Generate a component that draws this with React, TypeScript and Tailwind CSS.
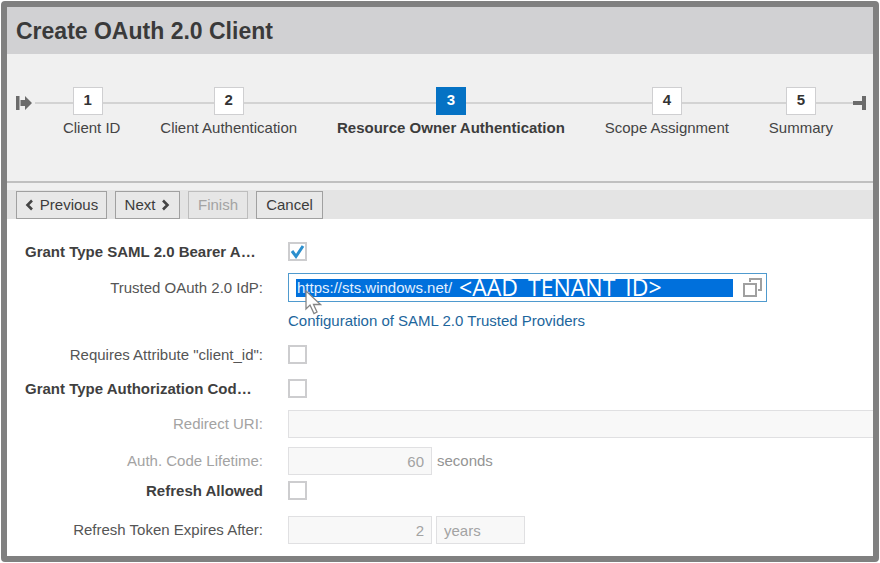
import { useState, type ReactNode } from "react";
import clsx from "clsx";

const steps = ["Client ID", "Client Authentication", "Resource Owner Authentication", "Scope Assignment", "Summary"];
const current = 2;

function StartMark() {
  return (
    <svg width="19" height="16" viewBox="0 0 19 16" className="mt-1 shrink-0" aria-hidden="true">
      <path d="M0 1h3.500v14H0zM4.500 5H9V1l7 7-7 7v-4H4.500z" fill="#6b6b6b" />
    </svg>
  );
}

function EndMark() {
  return (
    <svg width="13" height="16" viewBox="0 0 13 16" className="mt-1 shrink-0" aria-hidden="true">
      <path d="M0 6h9V1h4v14H9v-5H0z" fill="#6b6b6b" />
    </svg>
  );
}

function Roadmap() {
  return (
    <nav aria-label="Wizard steps" className="flex h-[127px] items-start pt-[33px] pr-[7px] pl-[9px]">
      <div className="flex h-7 items-center">
        <StartMark />
      </div>
      <ol className="flex min-w-0 flex-1">
        {steps.map((step, i) => (
          <li key={step} className="flex-auto" aria-current={i === current ? "step" : undefined}>
            <div className="flex items-center">
              <div className="mt-1 h-0.5 flex-1 bg-[#d3d3d3]" />
              <div
                className={clsx(
                  "flex h-7 w-[30px] items-center justify-center border pb-0.5 font-bold",
                  i === current ? "border-[#0572c4] bg-[#0572c4] text-white" : "border-[#cfcfd1] bg-white text-[#333]",
                )}
              >
                {i + 1}
              </div>
              <div className="mt-1 h-0.5 flex-1 bg-[#d3d3d3]" />
            </div>
            <div
              className={clsx(
                "mt-1 pr-[19px] text-center leading-[18px] whitespace-nowrap",
                i === 0 ? "pl-[27px]" : "pl-[19px]",
                i === current ? "font-bold text-[#3c3c3c]" : "text-[#444]",
              )}
            >
              {step}
            </div>
          </li>
        ))}
      </ol>
      <div className="flex h-7 items-center">
        <EndMark />
      </div>
    </nav>
  );
}

function Chevron({ right = false }: { right?: boolean }) {
  return (
    <svg width="8" height="12" viewBox="0 0 8 12" fill="none" stroke="#444" strokeWidth="2.600" aria-hidden="true">
      <path d={right ? "M1 1.500L5.500 6 1 10.500" : "M7 1.500L2.500 6 7 10.500"} />
    </svg>
  );
}

function ToolButton({
  children,
  className,
  disabled = false,
}: {
  children: ReactNode;
  className: string;
  disabled?: boolean;
}) {
  return (
    <button
      type="button"
      disabled={disabled}
      className={clsx(
        "flex h-7 items-center justify-center gap-[7px] border",
        disabled ? "border-[#bdbdbd] bg-[#e6e6e6] text-[#a3a3a3]" : "border-[#a0a0a0] bg-[#e8e8e8] text-[#3c3c3c]",
        className,
      )}
    >
      {children}
    </button>
  );
}

function Row({
  id,
  label,
  className,
  tone = "normal",
  children,
}: {
  id: string;
  label: string;
  className?: string;
  tone?: "normal" | "heading" | "clipped" | "muted";
  children: ReactNode;
}) {
  return (
    <div className={clsx("flex items-center gap-[25px]", className)}>
      <label
        htmlFor={id}
        className={clsx(
          "w-[238px] shrink-0 leading-[18px] whitespace-nowrap",
          tone === "clipped" ? "pt-0.5 text-left" : "text-right",
          tone === "normal" && "text-[#555]",
          tone === "muted" && "text-[#a3a3a3]",
          (tone === "heading" || tone === "clipped") && "font-bold text-[#3f3f3f]",
        )}
      >
        {label}
      </label>
      {children}
    </div>
  );
}

function Tick({ id, initial = false }: { id: string; initial?: boolean }) {
  const [on, setOn] = useState(initial);
  return (
    <span className="relative flex">
      <input
        id={id}
        type="checkbox"
        checked={on}
        onChange={() => setOn(!on)}
        className="size-[19px] appearance-none border-2 border-[#cdcdcf] bg-white"
      />
      {on && (
        <svg
          viewBox="0 0 19 19"
          className="pointer-events-none absolute inset-0 size-[19px]"
          fill="none"
          aria-hidden="true"
        >
          <path d="M4 9l4 5.500L15 4" stroke="#2b8fce" strokeWidth="3" />
        </svg>
      )}
    </span>
  );
}

const disabledField = "h-7 min-w-0 border border-[#e0e0e2] bg-[#f8f8f8] px-[7px] text-[#a3a3a3]";

export default function App() {
  return (
    <div className="flex min-h-screen bg-white p-px font-['Liberation_Sans',Arial,sans-serif] text-[15px]">
      <main className="flex min-w-0 flex-1 flex-col overflow-hidden rounded border-6 border-[#808080] bg-white">
        <header className="flex h-[47px] items-center bg-[#d1d1d3] px-[9px] pt-0.5">
          <h1 className="text-[23px] font-bold text-[#3a3a3a]">Create OAuth 2.0 Client</h1>
        </header>
        <section className="bg-[#f0f0f0]">
          <Roadmap />
          <div className="h-[9px] border-t-2 border-[#c0c0c0]" />
        </section>
        <div role="toolbar" className="flex gap-2 bg-[#e4e4e4] px-[9px] pt-px">
          <ToolButton className="w-[91px]">
            <Chevron />
            Previous
          </ToolButton>
          <ToolButton className="w-[65px]">
            Next
            <Chevron right />
          </ToolButton>
          <ToolButton className="w-[60px]" disabled>
            Finish
          </ToolButton>
          <ToolButton className="w-[67px]">Cancel</ToolButton>
        </div>
        <form className="pt-[22px] pl-[18px]">
          <Row id="saml" label="Grant Type SAML 2.0 Bearer A…" tone="clipped">
            <Tick id="saml" initial />
          </Row>
          <Row id="idp" label="Trusted OAuth 2.0 IdP:" className="mt-3">
            <div className="relative flex h-[29px] w-[479px] items-center border border-[#4f9ace] bg-white pr-1 pl-[7px]">
              <div className="flex h-[18px] min-w-0 flex-1 items-center bg-[#0070dc] text-white">
                <input
                  id="idp"
                  defaultValue="https://sts.windows.net/"
                  className="h-5 w-[163px] bg-transparent pt-0.5 pl-px text-[#e4f1ff] outline-none"
                />
                <span className="pb-0.5 font-['Open_Sans','Noto_Sans',sans-serif] text-[23px] leading-[18px]">
                  {"<AAD_TENANT_ID>"}
                </span>
              </div>
              <button type="button" aria-label="Value help" className="ml-2.5">
                <svg width="19" height="19" viewBox="0 0 19 19" fill="none" stroke="#a0a0a0" strokeWidth="2">
                  <path d="M1 6h12v12H1zM7 4V1h11v11h-3" />
                </svg>
              </button>
              <svg
                width="17"
                height="25"
                viewBox="0 0 17 25"
                className="pointer-events-none absolute top-4 left-4"
                aria-hidden="true"
              >
                <path
                  d="M1 1v18l4-4 4 8.500 3-1.500-3.500-7.500H15.500z"
                  fill="#fff"
                  stroke="#858585"
                  strokeWidth="1.300"
                />
              </svg>
            </div>
          </Row>
          <div className="mt-[9px] flex gap-[25px]">
            <div className="w-[238px] shrink-0" />
            <a href="#providers" className="leading-5 text-[#1d669c]">
              Configuration of SAML 2.0 Trusted Providers
            </a>
          </div>
          <Row id="client" label={'Requires Attribute "client_id":'} className="mt-3.5">
            <Tick id="client" />
          </Row>
          <Row id="code" label="Grant Type Authorization Cod…" tone="clipped" className="mt-3.5">
            <Tick id="code" />
          </Row>
          <Row id="uri" label="Redirect URI:" tone="muted" className="mt-3">
            <input id="uri" disabled className={clsx(disabledField, "flex-1 border-r-0")} />
          </Row>
          <Row id="life" label="Auth. Code Lifetime:" tone="muted" className="mt-[9px]">
            <div className="flex items-center gap-[5px]">
              <input id="life" disabled value="60" className={clsx(disabledField, "w-36 text-right")} />
              <span className="text-[#949494]">seconds</span>
            </div>
          </Row>
          <Row id="refresh" label="Refresh Allowed" tone="heading" className="mt-1.5">
            <Tick id="refresh" />
          </Row>
          <Row id="expires" label="Refresh Token Expires After:" className="mt-4">
            <div className="flex items-center gap-1">
              <input id="expires" disabled value="2" className={clsx(disabledField, "w-36 text-right")} />
              <input aria-label="Unit" disabled value="years" className={clsx(disabledField, "w-[89px]")} />
            </div>
          </Row>
        </form>
      </main>
    </div>
  );
}
